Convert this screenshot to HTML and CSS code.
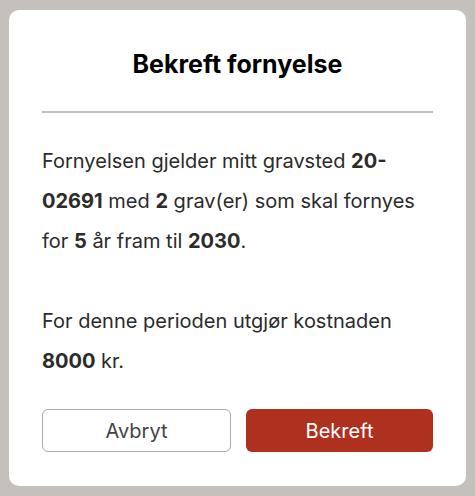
FILE: index.html
```html
<!DOCTYPE html>
<html>
	<head>
		<meta charset="UTF-8">
		<title>Bekreft fornyelse</title>
		<link rel="stylesheet" href="styles.css">
	</head>
	<body>
		<div class="modal">
			<h2 class="title">Bekreft fornyelse</h2>
			<hr class="line">
			<p class="text">Fornyelsen gjelder mitt gravsted <b>20-02691</b> med <b>2</b> grav(er) som skal fornyes for <b>5</b> år fram til <b>2030</b>.</p>
			<p class="text">For denne perioden utgjør kostnaden <b>8000</b> kr.</p>
			<div class="actions">
				<button class="btn btn-cancel">Avbryt</button>
				<button class="btn btn-ok">Bekreft</button>
			</div>
		</div>
	</body>
</html>
```

FILE: styles.css
```css
body{
margin: 0;
background: #c4c1bd;
font-family: Inter, "Noto Sans", sans-serif;
}
.modal{
width: 457px;
height: 476px;
box-sizing: border-box;
margin: 10px 0 0 9px;
padding: 40px 33px 34px;
background: #fff;
border-radius: 10px;
}
.title{
margin: 0;
font-size: 25px;
line-height: 28px;
font-weight: 700;
text-align: center;
color: #000;
}
.line{
margin: 33px 0 0;
border: none;
height: 2px;
background: #c0c0c0;
}
.text{
margin: 28px 0 0;
font-size: 20px;
line-height: 40px;
color: #2b2b2b;
}
.text + .text{
margin-top: 40px;
}
.text b{
font-weight: 700;
}
.actions{
display: flex;
gap: 15px;
margin-top: 28px;
}
.btn{
flex: 1;
height: 43px;
border-radius: 6px;
font-family: inherit;
font-size: 20px;
}
.btn-cancel{
background: #fff;
border: 1px solid #aaa;
color: #444;
}
.btn-ok{
background: #b0301f;
border: none;
color: #fff;
}
```
